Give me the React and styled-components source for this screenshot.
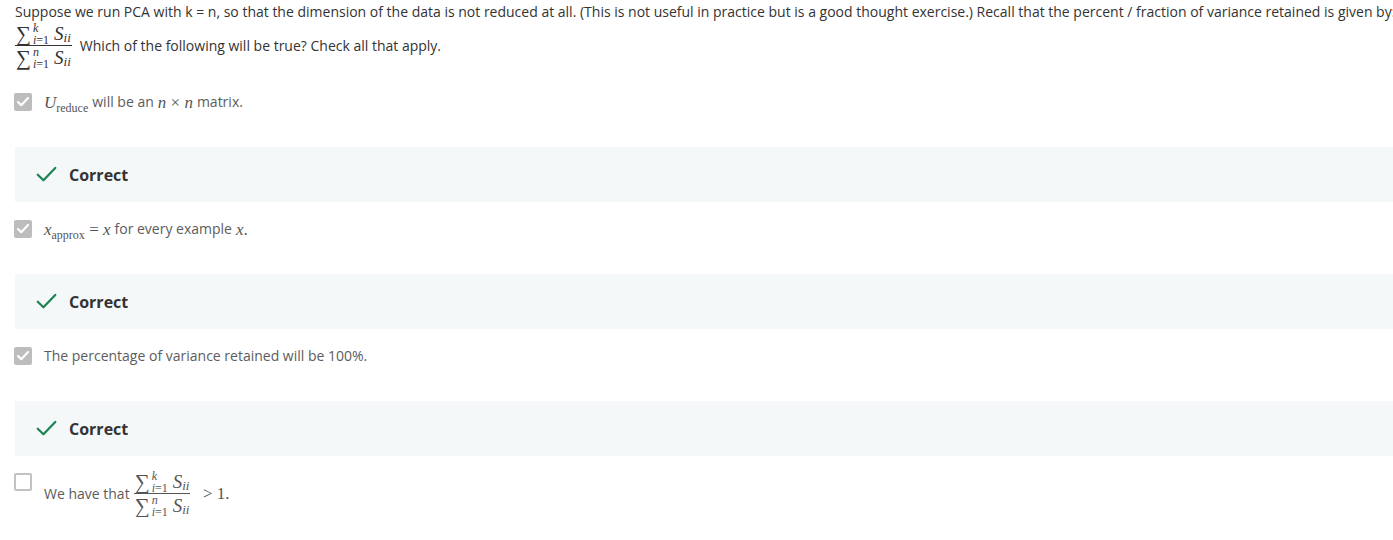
import styled, { createGlobalStyle } from 'styled-components'

const GlobalStyle = createGlobalStyle`
  html, body {
    margin: 0;
    padding: 0;
    background: #ffffff;
    overflow: hidden;
  }
  body {
    font-family: "Open Sans", "Liberation Sans", sans-serif;
  }
`

const Page = styled.div`
  width: 1420px;
  padding: 2px 0 0 15px;
  box-sizing: border-box;
`

const Question = styled.div`
  font-size: 14px;
  line-height: 20px;
  color: #333333;
`

const Line = styled.div`
  white-space: nowrap;
  display: flex;
  align-items: center;
  gap: ${p => p.gap || 0}px;
`

const Options = styled.div`
  margin-top: 23px;
  display: flex;
  flex-direction: column;
`

const Row = styled.div`
  display: flex;
  align-items: flex-start;
  gap: 12px;
  font-size: 14px;
  line-height: 20px;
  color: #5c5c5c;
  margin-left: -1px;
  margin-top: ${p => p.top || 0}px;
`

const Box = styled.span`
  flex: none;
  width: 18px;
  height: 18px;
  margin-top: ${p => p.offset || 1}px;
  box-sizing: border-box;
  border-radius: 2px;
  display: flex;
  align-items: center;
  justify-content: center;
  background: ${p => (p.checked ? '#bdbdbd' : '#ffffff')};
  border: ${p => (p.checked ? 'none' : '2px solid #c2c2c2')};
`

const RowText = styled.div`
  display: flex;
  align-items: center;
  white-space: nowrap;
  gap: 4px;
`

const Feedback = styled.div`
  margin-top: 35px;
  margin-bottom: 17px;
  height: 55px;
  background: #f5f8f8;
  display: flex;
  align-items: center;
  padding-left: 21px;
  gap: 12px;
  font-size: 16px;
  font-weight: 700;
  color: #333333;
`

const Serif = styled.span`
  font-family: "Liberation Serif", "DejaVu Serif", serif;
  font-style: ${p => (p.roman ? 'normal' : 'italic')};
  font-size: ${p => p.size || 17}px;
  color: inherit;
  line-height: 1;
`

const Sub = styled.span`
  font-family: "Liberation Serif", "DejaVu Serif", serif;
  font-style: ${p => (p.roman ? 'normal' : 'italic')};
  font-size: ${p => p.size || 12}px;
  position: relative;
  top: 4px;
  line-height: 1;
`

const MathRun = styled.span`
  display: inline-flex;
  align-items: baseline;
  color: ${p => p.color || '#555555'};
`

const Frac = styled.span`
  display: inline-flex;
  flex-direction: column;
  align-items: center;
  color: ${p => p.color || '#555555'};
  font-family: "Liberation Serif", "DejaVu Serif", serif;
`

const FracPart = styled.span`
  display: flex;
  align-items: center;
  height: 23px;
  padding: 0 1px;
`

const Bar = styled.span`
  align-self: stretch;
  height: 1px;
  background: currentColor;
`

const Sigma = styled.span`
  font-size: 21px;
  line-height: 1;
  font-family: "Liberation Serif", serif;
  position: relative;
  top: 1px;
  padding-right: 2px;
`

const Scripts = styled.span`
  display: inline-flex;
  flex-direction: column;
  font-size: 12px;
  line-height: 12px;
  margin-right: 5px;
`

const Script = styled.span`
  font-style: ${p => (p.roman ? 'normal' : 'italic')};
`

function Check({ color = '#ffffff', size = 12, width = 2.2 }) {
  return (
    <svg width={size} height={size * 0.78} viewBox="0 0 24 18.7" fill="none">
      <path d="M2 10 L8.5 16.3 L22 2.2" stroke={color} strokeWidth={width * 2} strokeLinecap="round" strokeLinejoin="round" />
    </svg>
  )
}

function SumTerm({ top }) {
  return (
    <FracPart>
      <Sigma>∑</Sigma>
      <Scripts>
        <Script>{top}</Script>
        <Script roman><i>i</i>=1</Script>
      </Scripts>
      <Serif size={19}>S</Serif>
      <Sub size={13}>ii</Sub>
    </FracPart>
  )
}

function Ratio({ color }) {
  return (
    <Frac color={color}>
      <SumTerm top="k" />
      <Bar />
      <SumTerm top="n" />
    </Frac>
  )
}

function Option({ checked, children, top, offset }) {
  return (
    <Row top={top}>
      <Box checked={checked} offset={offset}>{checked && <Check />}</Box>
      <RowText>{children}</RowText>
    </Row>
  )
}

function Correct() {
  return (
    <Feedback>
      <Check color="#1f8354" size={21} width={1.3} />
      <span>Correct</span>
    </Feedback>
  )
}

export default function App() {
  return (
    <Page>
      <GlobalStyle />
      <Question>
        <Line>
          Suppose we run PCA with k = n, so that the dimension of the data is not reduced at all. (This is not useful in practice but is a good thought exercise.) Recall that the percent / fraction of variance retained is given by:
        </Line>
        <Line gap={8}>
          <Ratio color="#333333" />
          <span>Which of the following will be true? Check all that apply.</span>
        </Line>
      </Question>

      <Options>
        <Option checked>
          <MathRun>
            <Serif>U</Serif>
            <Sub roman>reduce</Sub>
          </MathRun>
          <span>will be an</span>
          <MathRun>
            <Serif>n</Serif>
            <Serif roman>&nbsp;×&nbsp;</Serif>
            <Serif>n</Serif>
          </MathRun>
          <span>matrix.</span>
        </Option>
        <Correct />

        <Option checked>
          <MathRun>
            <Serif>x</Serif>
            <Sub roman>approx</Sub>
            <Serif roman>&nbsp;=&nbsp;</Serif>
            <Serif>x</Serif>
          </MathRun>
          <span>for every example</span>
          <MathRun>
            <Serif>x</Serif>
            <Serif roman>.</Serif>
          </MathRun>
        </Option>
        <Correct />

        <Option checked>
          <span>The percentage of variance retained will be 100%.</span>
        </Option>
        <Correct />

        <Option top={-3} offset={3}>
          <span>We have that</span>
          <Ratio color="#555555" />
          <MathRun>
            <Serif roman>&nbsp;&nbsp;&gt; 1.</Serif>
          </MathRun>
        </Option>
      </Options>
    </Page>
  )
}
